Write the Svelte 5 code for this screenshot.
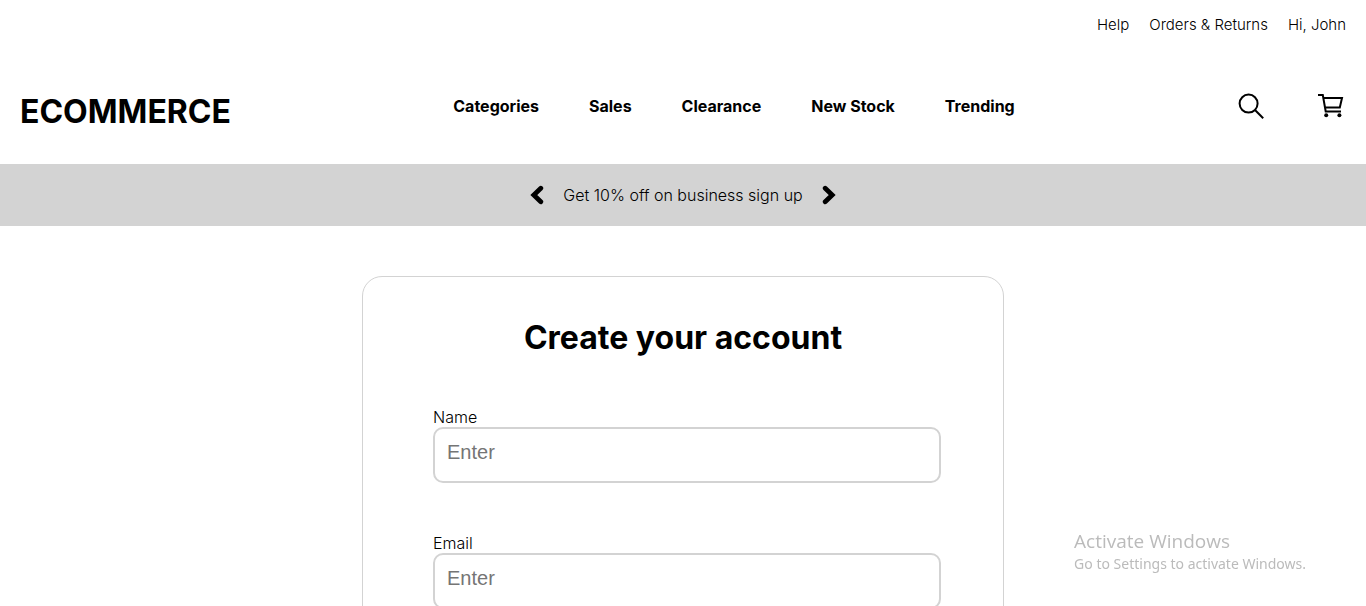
<script>
  const accountLinks = ['Help', 'Orders & Returns', 'Hi, John'];
  const sections = ['Categories', 'Sales', 'Clearance', 'New Stock', 'Trending'];
  const fields = [
    { id: 'name', label: 'Name', type: 'text' },
    { id: 'email', label: 'Email', type: 'email' }
  ];
</script>

<div class="page">
  <header>
    <nav class="account" aria-label="Account">
      {#each accountLinks as link}
        <a href="#top">{link}</a>
      {/each}
    </nav>
    <div class="main-bar">
      <a class="brand" href="#top">ECOMMERCE</a>
      <nav class="sections" aria-label="Sections">
        {#each sections as section}
          <a href="#top">{section}</a>
        {/each}
      </nav>
      <div class="tools">
        <button type="button" aria-label="Search">
          <svg width="32" height="32" viewBox="0 0 32 32" fill="none" stroke="#000" stroke-width="2">
            <circle cx="13.6" cy="12.6" r="9" />
            <path d="M20 19 28.2 27.2" />
          </svg>
        </button>
        <button type="button" aria-label="Cart">
          <svg width="32" height="32" viewBox="0 0 32 32" fill="none" stroke="#000" stroke-width="2">
            <path d="M3 4h4.8L10.7 20.5H26M8.2 7H27l-2.2 9.5H10" />
            <circle cx="11.2" cy="24.3" r="2" fill="#000" stroke="none" />
            <circle cx="24.4" cy="24.3" r="2" fill="#000" stroke="none" />
          </svg>
        </button>
      </div>
    </div>
  </header>

  <div class="promo">
    <button type="button" aria-label="Previous offer">
      <svg width="14" height="20" viewBox="0 0 14 20" fill="none" stroke="#000" stroke-width="4.8" stroke-linecap="round">
        <path d="M10.8 3.2 3.8 10l7 6.8" />
      </svg>
    </button>
    <p>Get 10% off on business sign up</p>
    <button type="button" aria-label="Next offer">
      <svg width="14" height="20" viewBox="0 0 14 20" fill="none" stroke="#000" stroke-width="4.8" stroke-linecap="round">
        <path d="M3.2 3.2 10.2 10l-7 6.8" />
      </svg>
    </button>
  </div>

  <main>
    <form>
      <h1>Create your account</h1>
      {#each fields as field}
        <div class="field">
          <label for={field.id}>{field.label}</label>
          <input id={field.id} type={field.type} placeholder="Enter" />
        </div>
      {/each}
    </form>
  </main>
</div>

<aside class="notice">
  <strong>Activate Windows</strong>
  <span>Go to Settings to activate Windows.</span>
</aside>

<style>
  :global(html) {
    scrollbar-width: none;
  }

  .page {
    font-family: Inter, sans-serif;
    font-size: 16px;
    line-height: 20px;
    color: #000;
    background: #fff;
  }

  a {
    color: inherit;
    text-decoration: none;
  }

  button {
    display: flex;
    padding: 0;
    border: 0;
    background: none;
    cursor: pointer;
  }

  .account {
    display: flex;
    justify-content: flex-end;
    gap: 20px;
    padding: 15px 20px;
    font-size: 15px;
    font-weight: 300;
  }

  .main-bar {
    display: grid;
    grid-template-columns: 1fr auto 1fr;
    align-items: start;
    padding: 41px 20px 31px;
  }

  .brand {
    font-size: 32px;
    font-weight: 700;
    line-height: 42px;
  }

  .sections {
    display: flex;
    gap: 50px;
    padding-top: 5px;
    padding-left: 102px;
    font-weight: 700;
  }

  .tools {
    display: flex;
    justify-content: flex-end;
    gap: 48px;
    margin-right: -1px;
  }

  .promo {
    display: flex;
    align-items: center;
    justify-content: center;
    gap: 19px;
    padding: 21px 20px;
    background: #d3d3d3;
    font-weight: 300;
  }

  .promo p {
    margin: 0;
  }

  main {
    display: flex;
    justify-content: center;
    padding: 50px 20px;
  }

  form {
    box-sizing: border-box;
    width: 100%;
    max-width: 642px;
    padding: 40px 62px 70px 70px;
    border: 1px solid #d3d3d3;
    border-radius: 20px;
  }

  h1 {
    margin: 0 0 48px;
    padding-right: 8px;
    font-size: 32px;
    font-weight: 700;
    line-height: 42px;
    text-align: center;
  }

  .field {
    display: flex;
    flex-direction: column;
    margin-bottom: 50px;
    font-weight: 300;
  }

  input {
    box-sizing: border-box;
    width: 100%;
    height: 56px;
    padding: 10px 12px 16px;
    border: 2px solid #d3d3d3;
    border-radius: 10px;
    font-family: "Liberation Sans", Arial, sans-serif;
    font-size: 20px;
  }

  input::placeholder {
    color: #757575;
  }

  .notice {
    position: fixed;
    right: 60px;
    bottom: 32px;
    display: flex;
    flex-direction: column;
    font-family: "Noto Sans", sans-serif;
    font-size: 14px;
    line-height: 20px;
    color: #bbb;
    pointer-events: none;
  }

  .notice strong {
    font-family: "Open Sans", sans-serif;
    font-size: 19px;
    font-weight: 400;
    line-height: 26px;
  }
</style>
